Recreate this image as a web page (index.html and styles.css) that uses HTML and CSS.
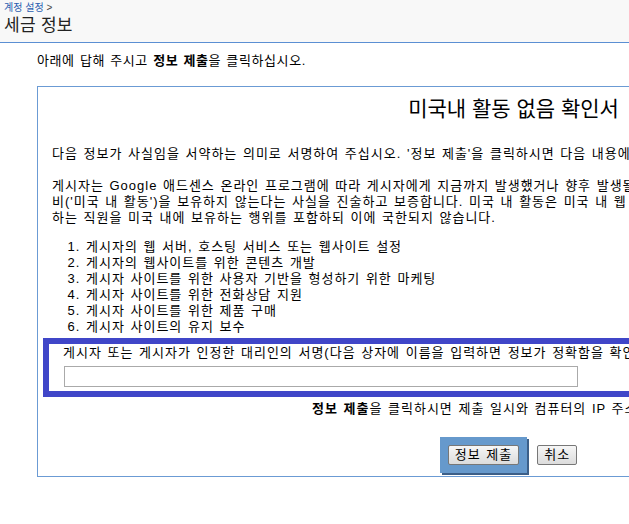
FILE: index.html
```html
<!DOCTYPE html>
<html lang="ko">
<head>
<meta charset="utf-8">
<title>세금 정보</title>
<link rel="stylesheet" href="styles.css">
</head>
<body>
<div class="page">
  <div class="header">
    <div class="crumb"><a class="crumb-link" href="#">계정 설정</a> <span class="crumb-sep">&gt;</span></div>
    <h1 class="title">세금 정보</h1>
  </div>
  <p class="intro">아래에 답해 주시고 <b>정보 제출</b>을 클릭하십시오.</p>
  <div class="panel">
    <h2 class="panel-title">미국내 활동 없음 확인서</h2>
    <p class="para">다음 정보가 사실임을 서약하는 의미로 서명하여 주십시오. '정보 제출'을 클릭하시면 다음 내용에 동의하는 것으로 간주됩니다.</p>
    <p class="para">게시자는 Google 애드센스 온라인 프로그램에 따라 게시자에게 지금까지 발생했거나 향후 발생될 수입과 관련하여 미국 내에서 수행하는 활동이나 서<br>비('미국 내 활동')을 보유하지 않는다는 사실을 진술하고 보증합니다. 미국 내 활동은 미국 내 웹 서버 또는 장비를 보유하거나 미국 내에서 업무를 수행<br>하는 직원을 미국 내에 보유하는 행위를 포함하되 이에 국한되지 않습니다.</p>
    <ol class="list">
      <li>게시자의 웹 서버, 호스팅 서비스 또는 웹사이트 설정</li>
      <li>게시자의 웹사이트를 위한 콘텐츠 개발</li>
      <li>게시자 사이트를 위한 사용자 기반을 형성하기 위한 마케팅</li>
      <li>게시자 사이트를 위한 전화상담 지원</li>
      <li>게시자 사이트를 위한 제품 구매</li>
      <li>게시자 사이트의 유지 보수</li>
    </ol>
    <div class="sign">
      <label class="sign-label" for="sig">게시자 또는 게시자가 인정한 대리인의 서명(다음 상자에 이름을 입력하면 정보가 정확함을 확인하는 것으로 간주됩니다)</label>
      <input class="sign-input" id="sig" type="text">
    </div>
    <p class="note"><b>정보 제출</b>을 클릭하시면 제출 일시와 컴퓨터의 IP 주소가 이 확인서와 함께 기록됩니다.</p>
    <div class="actions">
      <div class="primary-wrap"><button class="btn" type="button">정보 제출</button></div>
      <button class="btn" type="button">취소</button>
    </div>
  </div>
</div>
</body>
</html>
```
FILE: styles.css
```css
html, body {
  margin: 0;
  padding: 0;
  background: #ffffff;
}
body {
  width: 629px;
  height: 524px;
  overflow: hidden;
  font-family: "Liberation Sans", "Noto Sans CJK KR", sans-serif;
  font-size: 13px;
  color: #000;
}
.page {
  width: 1200px;
}
.header {
  width: 629px;
  height: 43px;
  background: #f8f8f8;
  border-bottom: 1px solid #5b8fd3;
  box-sizing: border-box;
  padding: 2px 4px 0;
}
.crumb {
  font-size: 10px;
  line-height: 12px;
  color: #444;
}
.crumb-link {
  color: #2a5db0;
  text-decoration: none;
}
.title {
  margin: 1px 0 0;
  font-size: 17px;
  font-weight: normal;
  line-height: 22px;
  color: #222;
  letter-spacing: 0.3px;
}
.intro {
  margin: 10px 0 0 37px;
  line-height: 16px;
  letter-spacing: 0.6px;
  word-spacing: 1px;
}
.panel {
  margin: 17px 0 0 37px;
  width: 951px;
  border: 1px solid #6b9bd4;
  letter-spacing: 1px;
  word-spacing: 1px;
}
.panel-title {
  margin: 9px 0 0;
  text-align: center;
  font-size: 21px;
  font-weight: normal;
  line-height: 26px;
  letter-spacing: 0;
  word-spacing: 0;
}
.para {
  margin: 24px 0 0 14px;
  line-height: 16px;
  white-space: nowrap;
}
.para + .para {
  margin-top: 16px;
}
.list {
  margin: 13px 0 0;
  padding-left: 48px;
  line-height: 16px;
}
.sign {
  margin: 3px 0 0 5px;
  border: 6px solid #4046c8;
  padding: 1px 0 4px 14px;
  display: flex;
  flex-direction: column;
  gap: 5px;
}
.sign-label {
  line-height: 16px;
  white-space: nowrap;
}
.sign-input {
  width: 514px;
  height: 21px;
  box-sizing: border-box;
  border: 1px solid #aaa;
  margin: 0 0 0 1px;
  padding: 0;
}
.note {
  margin: 4px 0 0 274px;
  line-height: 16px;
  white-space: nowrap;
}
.actions {
  margin: 20px 0 3px;
  padding-right: 10px;
  display: flex;
  justify-content: center;
  align-items: center;
  gap: 10px;
}
.primary-wrap {
  background: #6699cc;
  padding: 8px;
  box-shadow: 2px 2px 0 #3c5f88;
}
.btn {
  font-family: "Liberation Sans", "Noto Sans CJK KR", sans-serif;
  font-size: 13px;
  height: 20px;
  line-height: 16px;
  padding: 0 6px;
  letter-spacing: 1px;
  word-spacing: 1px;
  border: 1px solid #777;
  border-radius: 2px;
  background: linear-gradient(#f6f6f6, #dcdcdc);
  color: #000;
}
```
